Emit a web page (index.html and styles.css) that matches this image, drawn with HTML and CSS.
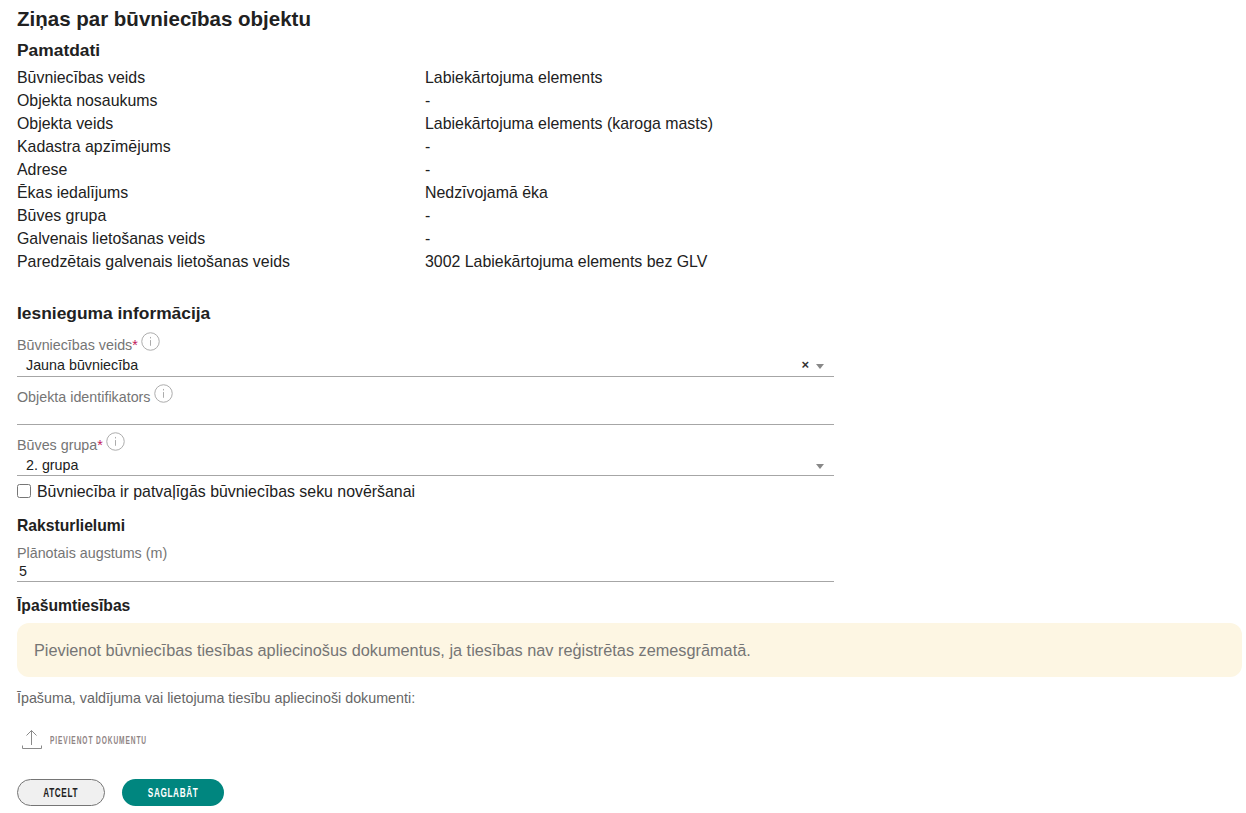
FILE: index.html
```html
<!DOCTYPE html>
<html lang="en">
<head>
    <meta charset="UTF-8">
    <title>Ziņas par būvniecības objektu</title>
    <link rel="stylesheet" href="styles.css">
</head>
<body>

<div class="page">
    <h1 class="page-title">Ziņas par būvniecības objektu</h1>

    <!-- Pamatdati -->
    <h2 class="section-title section-large section-first">Pamatdati</h2>
    <dl class="info-list">
        <dt>Būvniecības veids</dt><dd>Labiekārtojuma elements</dd>
        <dt>Objekta nosaukums</dt><dd>-</dd>
        <dt>Objekta veids</dt><dd>Labiekārtojuma elements (karoga masts)</dd>
        <dt>Kadastra apzīmējums</dt><dd>-</dd>
        <dt>Adrese</dt><dd>-</dd>
        <dt>Ēkas iedalījums</dt><dd>Nedzīvojamā ēka</dd>
        <dt>Būves grupa</dt><dd>-</dd>
        <dt>Galvenais lietošanas veids</dt><dd>-</dd>
        <dt>Paredzētais galvenais lietošanas veids</dt><dd>3002 Labiekārtojuma elements bez GLV</dd>
    </dl>

    <!-- Iesnieguma informācija -->
    <h2 class="section-title section-large section-submission">Iesnieguma informācija</h2>
    <div class="form-col">
        <div class="field field-type">
            <div class="field-label">Būvniecības veids<span class="req">*</span>
                <svg class="info-icon" viewBox="0 0 20 20"><circle cx="10" cy="10" r="9.200"/><path d="M10 8.500v6M10 5.200v1.600"/></svg>
            </div>
            <div class="select-box">
                <span class="select-value">Jauna būvniecība</span>
                <span class="select-clear">×</span>
                <span class="select-arrow"></span>
            </div>
        </div>
        <div class="field field-id">
            <div class="field-label">Objekta identifikators
                <svg class="info-icon" viewBox="0 0 20 20"><circle cx="10" cy="10" r="9.200"/><path d="M10 8.500v6M10 5.200v1.600"/></svg>
            </div>
            <div class="select-box"></div>
        </div>
        <div class="field field-group">
            <div class="field-label">Būves grupa<span class="req">*</span>
                <svg class="info-icon" viewBox="0 0 20 20"><circle cx="10" cy="10" r="9.200"/><path d="M10 8.500v6M10 5.200v1.600"/></svg>
            </div>
            <div class="select-box">
                <span class="select-value">2. grupa</span>
                <span class="select-arrow"></span>
            </div>
        </div>
        <label class="check-row">
            <input type="checkbox">
            <span>Būvniecība ir patvaļīgās būvniecības seku novēršanai</span>
        </label>

        <h2 class="section-title section-sizes">Raksturlielumi</h2>
        <div class="field field-height">
            <div class="field-label">Plānotais augstums (m)</div>
            <div class="input-box">5</div>
        </div>

        <h2 class="section-title section-owner">Īpašumtiesības</h2>
    </div>

    <div class="notice">Pievienot būvniecības tiesības apliecinošus dokumentus, ja tiesības nav reģistrētas zemesgrāmatā.</div>

    <p class="docs-label">Īpašuma, valdījuma vai lietojuma tiesību apliecinoši dokumenti:</p>

    <div class="upload-row">
        <svg class="upload-icon" viewBox="0 0 20 20"><path d="M9.500 15V0.500M4.500 5.500L9.500 0.500L14.500 5.500M0.500 15.500V18.500H19.500V15.500"/></svg>
        <span class="upload-text">PIEVIENOT DOKUMENTU</span>
    </div>

    <div class="actions">
        <button class="btn btn-cancel"><span class="btn-text">ATCELT</span></button>
        <button class="btn btn-save"><span class="btn-text">SAGLABĀT</span></button>
    </div>
</div>

</body>
</html>
```

FILE: styles.css
```css
* {
    margin: 0;
    padding: 0;
    box-sizing: border-box;
}

html, body {
    height: 100%;
    overflow: hidden;
    background-color: #fff;
    font-family: "Liberation Sans", Arial, sans-serif;
    color: #212121;
}

.page {
    padding: 7px 4px 0 17px;
}

.page-title {
    font-size: 20.500px;
    line-height: 23px;
    font-weight: 700;
}

.section-title {
    font-size: 15.700px;
    line-height: 18px;
    font-weight: 700;
}

.section-large {
    font-size: 17.400px;
}

.section-first {
    margin-top: 11px;
}

/* Read only data */
.info-list {
    display: grid;
    grid-template-columns: 408px 1fr;
    grid-auto-rows: 23px;
    margin-top: 7px;
    font-size: 15.900px;
    line-height: 23px;
}

.section-submission {
    margin-top: 31px;
}

.form-col {
    width: 817px;
}

.field-label {
    display: flex;
    align-items: flex-start;
    font-size: 14.300px;
    line-height: 16px;
    color: #757575;
}

.req {
    color: #c2185b;
}

.info-icon {
    width: 19px;
    height: 19px;
    margin: -5px 0 0 3px;
    fill: none;
    stroke: #a8a8a8;
    stroke-width: 1;
}

.select-box {
    display: flex;
    align-items: center;
    height: 21px;
    margin-top: 3px;
    padding-left: 9px;
    border-bottom: 1px solid #a6a6a6;
    font-size: 14.300px;
}

.select-value {
    flex: 1;
}

.select-clear {
    font-size: 13px;
    font-weight: 700;
    line-height: 16px;
    margin-right: 7px;
    color: #333;
}

.select-arrow {
    width: 0;
    height: 0;
    margin-right: 10px;
    margin-top: 2px;
    border-left: 4px solid transparent;
    border-right: 4px solid transparent;
    border-top: 5px solid #888;
}

.field-type {
    margin-top: 15px;
}

.field-type .select-box {
    padding-bottom: 2px;
}

.field-id {
    margin-top: 12px;
}

.field-id .select-box {
    height: 17px;
}

.field-group {
    margin-top: 12px;
}

.field-group .select-box {
    margin-top: 2px;
}

.check-row {
    display: flex;
    align-items: center;
    margin-top: 6px;
    font-size: 15.900px;
    line-height: 20px;
}

.check-row input {
    width: 14px;
    height: 14px;
    margin: 0 6px 2px 0;
}

.section-sizes {
    margin-top: 15px;
}

.field-height {
    margin-top: 10px;
}

.input-box {
    height: 20px;
    margin-top: 1px;
    padding-left: 2px;
    border-bottom: 1px solid #a6a6a6;
    font-size: 14.300px;
    line-height: 19px;
}

.section-owner {
    margin-top: 15px;
}

.notice {
    margin-top: 8px;
    height: 54px;
    padding: 0 17px;
    border-radius: 12px;
    background-color: #fdf6e3;
    color: #757575;
    font-size: 16.300px;
    line-height: 54px;
}

.docs-label {
    margin-top: 13px;
    font-size: 14.300px;
    line-height: 16px;
    color: #666;
}

.upload-row {
    display: flex;
    align-items: center;
    margin-top: 24px;
    padding-left: 5px;
}

.upload-icon {
    width: 20px;
    height: 20px;
    fill: none;
    stroke: #8a8a8a;
    stroke-width: 1;
}

/* No condensed font here, so the bold sans is squeezed sideways */
.upload-text {
    display: inline-block;
    margin-left: 8px;
    font-size: 11px;
    font-weight: 700;
    letter-spacing: 1.500px;
    white-space: nowrap;
    color: #8f8484;
    transform: scaleX(0.6);
    transform-origin: left center;
}

.actions {
    display: flex;
    gap: 17px;
    margin-top: 29px;
}

.btn {
    height: 27px;
    border-radius: 14px;
    font-family: "Liberation Sans", Arial, sans-serif;
    font-size: 13px;
    font-weight: 700;
    letter-spacing: 1px;
}

.btn-text {
    display: inline-block;
    transform: scaleX(0.63);
}

.btn-cancel {
    width: 88px;
    border: 1px solid #757575;
    background-color: #f0f0f0;
    color: #212121;
}

.btn-save {
    width: 102px;
    border: none;
    background-color: #00867f;
    color: #fff;
}
```
